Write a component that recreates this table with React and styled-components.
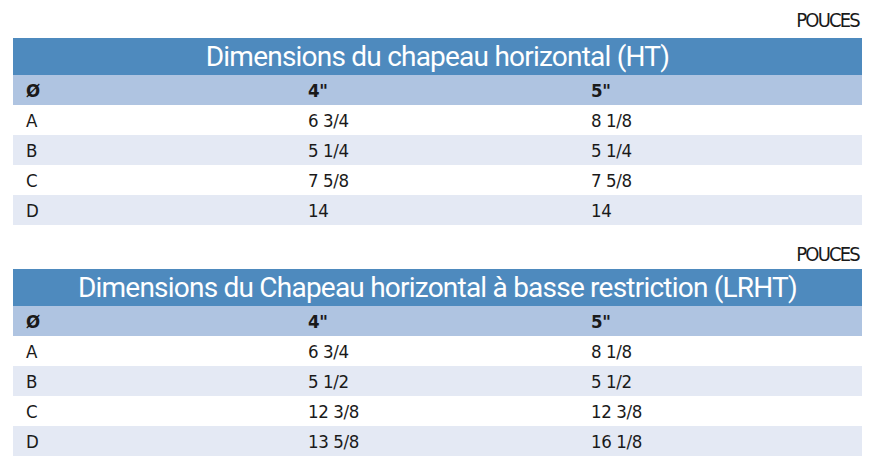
import React from "react";
import styled, { createGlobalStyle } from "styled-components";

const GlobalStyle = createGlobalStyle`
  html, body {
    margin: 0;
    padding: 0;
    background: #ffffff;
  }
  body {
    font-family: "DejaVu Sans Condensed", "Liberation Sans", sans-serif;
    color: #1a1a1a;
  }
`;

const Page = styled.div`
  width: 886px;
  box-sizing: border-box;
  padding: 8px 24px 0 13px;
  display: flex;
  flex-direction: column;
  gap: 17px;
`;

const Section = styled.section`
  display: flex;
  flex-direction: column;
`;

const Units = styled.div`
  height: 24px;
  line-height: 24px;
  font-size: 20px;
  letter-spacing: -1.8px;
  text-align: right;
  padding-right: 3px;
  margin-bottom: ${(p) => p.$space}px;
  color: #1a1a1a;
`;

const Table = styled.div`
  display: flex;
  flex-direction: column;
`;

const TitleBar = styled.div`
  height: 37px;
  line-height: 37px;
  background: #4e8abe;
  color: #ffffff;
  font-family: Roboto, "Liberation Sans", sans-serif;
  font-size: 28px;
  letter-spacing: -0.78px;
  text-align: center;
  white-space: nowrap;
`;

const Row = styled.div`
  display: grid;
  grid-template-columns: 282px 283px 1fr;
  height: 30px;
  box-sizing: border-box;
  padding-top: 2px;
  background: ${(p) => (p.$head ? "#afc4e1" : p.$stripe ? "#e4e9f4" : "#ffffff")};
  font-weight: ${(p) => (p.$head ? 700 : 400)};
`;

const Cell = styled.div`
  padding-left: 13px;
  line-height: 28px;
  font-size: 18.5px;
  letter-spacing: -0.4px;
  white-space: nowrap;
`;

const tables = [
  {
    space: 6,
    title: "Dimensions du chapeau horizontal (HT)",
    rows: [
      ["A", "6 3/4", "8 1/8"],
      ["B", "5 1/4", "5 1/4"],
      ["C", "7 5/8", "7 5/8"],
      ["D", "14", "14"],
    ],
  },
  {
    space: 3,
    title: "Dimensions du Chapeau horizontal à basse restriction (LRHT)",
    rows: [
      ["A", "6 3/4", "8 1/8"],
      ["B", "5 1/2", "5 1/2"],
      ["C", "12 3/8", "12 3/8"],
      ["D", "13 5/8", "16 1/8"],
    ],
  },
];

export default function App() {
  return (
    <>
      <GlobalStyle />
      <Page>
        {tables.map((t) => (
          <Section key={t.title}>
            <Units $space={t.space}>POUCES</Units>
            <Table>
              <TitleBar>{t.title}</TitleBar>
              <Row $head>
                <Cell>Ø</Cell>
                <Cell>4"</Cell>
                <Cell>5"</Cell>
              </Row>
              {t.rows.map((r, i) => (
                <Row key={r[0]} $stripe={i % 2 === 1}>
                  {r.map((c, j) => (
                    <Cell key={j}>{c}</Cell>
                  ))}
                </Row>
              ))}
            </Table>
          </Section>
        ))}
      </Page>
    </>
  );
}
